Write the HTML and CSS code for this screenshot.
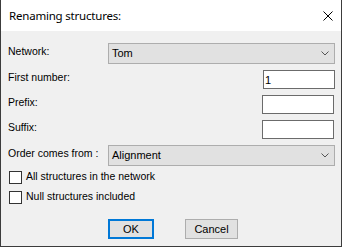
FILE: index.html
```html
<!DOCTYPE html>
<html lang="en">
<head>
    <meta charset="UTF-8">
    <meta name="viewport" content="width=device-width, initial-scale=1.0">
    <title>Renaming structures</title>
    <link rel="stylesheet" href="styles.css">
</head>
<body>
    <div class="dialog">
        <div class="titlebar">
            <span class="title">Renaming structures:</span>
            <svg class="close" width="10" height="10" viewBox="0 0 10 10">
                <path d="M0.5 0.5 L9.5 9.5 M9.5 0.5 L0.5 9.5" stroke="#000" stroke-width="1" fill="none"/>
            </svg>
        </div>
        <div class="content">
            <div class="row row-combo">
                <label>Network:</label>
                <div class="combo">
                    <span>Tom</span>
                    <svg class="chevron" width="8" height="5" viewBox="0 0 8 5">
                        <path d="M0.5 0.5 L4 4 L7.5 0.5" stroke="#555" stroke-width="1" fill="none"/>
                    </svg>
                </div>
            </div>
            <div class="row row-field">
                <label for="firstNumber">First number:</label>
                <input type="text" id="firstNumber" class="field field-first" value="1">
            </div>
            <div class="row row-field">
                <label for="prefix">Prefix:</label>
                <input type="text" id="prefix" class="field">
            </div>
            <div class="row row-field">
                <label for="suffix">Suffix:</label>
                <input type="text" id="suffix" class="field">
            </div>
            <div class="row row-combo">
                <label>Order comes from :</label>
                <div class="combo">
                    <span>Alignment</span>
                    <svg class="chevron" width="8" height="5" viewBox="0 0 8 5">
                        <path d="M0.5 0.5 L4 4 L7.5 0.5" stroke="#555" stroke-width="1" fill="none"/>
                    </svg>
                </div>
            </div>
            <label class="check check-all"><input type="checkbox"><span>All structures in the network</span></label>
            <label class="check check-null"><input type="checkbox"><span>Null structures included</span></label>
            <div class="buttons">
                <button class="btn btn-default">OK</button>
                <button class="btn btn-cancel">Cancel</button>
            </div>
        </div>
    </div>
</body>
</html>
```

FILE: styles.css
```css
* {
    box-sizing: border-box;
}
body {
    margin: 0;
    font-family: "Liberation Sans", Arial, sans-serif;
    font-size: 10.5px;
    color: #000;
}
.dialog {
    width: 342px;
    height: 247px;
    background-color: #f0f0f0;
    border: 1px solid #3c3c3c;
    border-top: none;
}
.titlebar {
    height: 31px;
    background-color: #fff;
    display: flex;
    align-items: center;
    justify-content: space-between;
    padding: 0 8px;
}
.title {
    font-family: "Noto Sans", sans-serif;
    font-size: 11.5px;
    letter-spacing: -0.2px;
}
.close {
    display: block;
}
.content {
    padding: 12px 6px 0 7px;
}
.row {
    display: flex;
    justify-content: space-between;
    align-items: flex-start;
    line-height: 13px;
}
.row label {
    padding-top: 2px;
}
.row-field {
    margin-top: 6px;
}
.row-field label {
    padding-top: 1px;
}
.row-field + .row-combo {
    margin-top: 6px;
}
.combo {
    width: 227px;
    height: 21px;
    border: 1px solid #adadad;
    background-color: #e1e1e1;
    display: flex;
    align-items: center;
    justify-content: space-between;
    padding: 0 5px 0 3px;
    font-size: 11px;
}
.chevron {
    display: block;
}
.field {
    width: 72px;
    height: 19px;
    margin: 0 1px 0 0;
    border: 1px solid #6b6b6b;
    background-color: #fff;
    font-family: "Liberation Sans", Arial, sans-serif;
    font-size: 11px;
    padding: 0 1px;
    outline: none;
}
.field-first {
    margin-right: 0;
}
.check {
    display: flex;
    align-items: flex-start;
    line-height: 13px;
}
.check-all {
    margin-top: 5px;
}
.check-null {
    margin-top: 7px;
}
.check input {
    appearance: none;
    width: 13px;
    height: 13px;
    margin: 0 4px 0 1px;
    border: 1px solid #333;
    background-color: #fff;
}
.check span {
    margin-top: -1px;
}
.buttons {
    display: flex;
    gap: 31px;
    margin-top: 15px;
    padding-left: 100px;
}
.btn {
    height: 20px;
    background-color: #e1e1e1;
    border: 1px solid #adadad;
    font-family: "Liberation Sans", Arial, sans-serif;
    font-size: 11px;
    padding: 0;
    color: #000;
}
.btn-default {
    width: 46px;
    border: 2px solid #0078d7;
}
.btn-cancel {
    width: 53px;
}
```
